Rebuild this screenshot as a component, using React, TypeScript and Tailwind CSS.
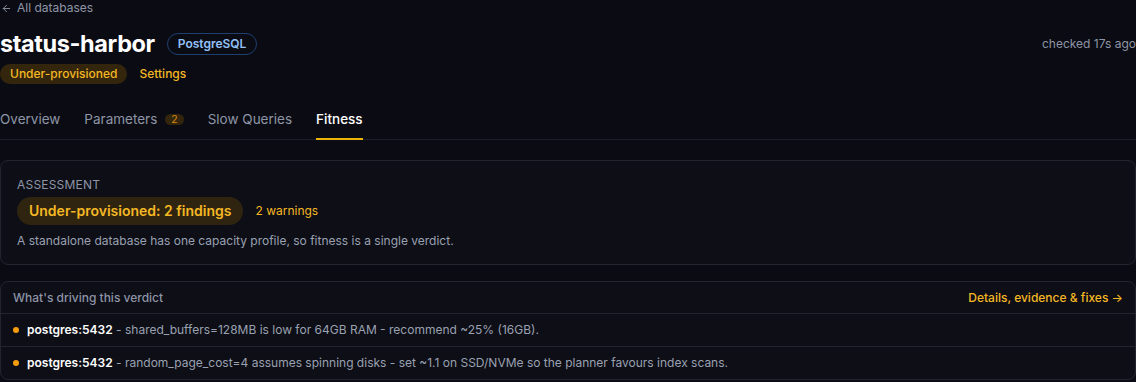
import { ArrowLeft } from "lucide-react"

const tabs = [
  { label: "Overview" },
  { label: "Parameters", badge: "2" },
  { label: "Slow Queries" },
  { label: "Fitness", active: true },
]

const findings = [
  {
    host: "postgres:5432",
    text: "shared_buffers=128MB is low for 64GB RAM - recommend ~25% (16GB).",
  },
  {
    host: "postgres:5432",
    text: "random_page_cost=4 assumes spinning disks - set ~1.1 on SSD/NVMe so the planner favours index scans.",
  },
]

export default function App() {
  return (
    <div
      className="min-h-screen w-full bg-[#0b0c13] text-[#e6e8ee]"
      style={{ fontFamily: "Inter, 'Noto Sans', sans-serif" }}
    >
      <div className="flex h-4 items-center gap-[5px] text-[12px] leading-4 text-[#8e95a6]">
        <ArrowLeft size={11} strokeWidth={2} className="ml-[1px]" />
        <span>All databases</span>
      </div>

      <div className="mt-3 flex items-center justify-between">
        <div className="flex items-center gap-3">
          <h1 className="text-[23.5px] font-bold leading-8 tracking-[-0.4px] text-white">status-harbor</h1>
          <span className="rounded-full border border-[#1f3f6e] px-2.5 py-[2px] text-[12px] font-semibold leading-4 text-[#93c0f8]">
            PostgreSQL
          </span>
        </div>
        <span className="text-[12px] text-[#8e95a6]">checked 17s ago</span>
      </div>

      <div className="mt-1 flex items-center gap-3">
        <span className="rounded-full bg-[#33260d] px-2.5 py-[2px] text-[12px] font-medium leading-4 text-[#f5b824]">
          Under-provisioned
        </span>
        <span className="text-[12px] font-medium text-[#f5b824]">Settings</span>
      </div>

      <div className="mt-[15px] flex gap-6 border-b border-[#1d1e28]">
        {tabs.map((tab) => (
          <div
            key={tab.label}
            className={
              tab.active
                ? "-mb-px flex items-center gap-2 border-b-2 border-[#eab308] pt-2.5 pb-[9px] text-[13.5px] font-medium leading-5 text-white"
                : "flex items-center gap-2 pt-2.5 pb-2.5 text-[13.5px] leading-5 text-[#8e95a6]"
            }
          >
            <span>{tab.label}</span>
            {tab.badge && (
              <span className="rounded-full bg-[#33260d] px-1.5 text-[10.5px] leading-[11px] text-[#d98a0b]">
                {tab.badge}
              </span>
            )}
          </div>
        ))}
      </div>

      <div className="mt-5 rounded-lg border border-[#23242f] bg-[#0d0e16] px-4 pt-4 pb-[14px]">
        <div className="text-[12px] uppercase leading-4 tracking-[0.2px] text-[#8e95a6]">Assessment</div>
        <div className="mt-1 flex items-center gap-3">
          <span className="rounded-full bg-[#2e2410] px-3 text-[14px] font-semibold leading-7 text-[#f5b824]">
            Under-provisioned: 2 findings
          </span>
          <span className="text-[12px] text-[#f5b824]">2 warnings</span>
        </div>
        <p className="mt-[7px] text-[12px] leading-[18px] text-[#9aa1b1]">
          A standalone database has one capacity profile, so fitness is a single verdict.
        </p>
      </div>

      <div className="mt-4 rounded-lg border border-[#23242f] bg-[#0d0e16]">
        <div className="flex items-center justify-between px-3 py-[7px] text-[12px] leading-[17px]">
          <span className="font-medium text-[#8e95a6]">What's driving this verdict</span>
          <span className="font-medium text-[#f5b824]">Details, evidence &amp; fixes →</span>
        </div>
        {findings.map((f, i) => (
          <div
            key={i}
            className="flex items-center gap-2 border-t border-[#23242f] px-3 py-[7px] text-[12px] leading-[18px]"
          >
            <span className="h-[6px] w-[6px] rounded-full bg-[#f59e0b]" />
            <span>
              <span className="font-semibold text-white">{f.host}</span>
              <span className="text-[#9aa1b1]"> - {f.text}</span>
            </span>
          </div>
        ))}
      </div>
    </div>
  )
}
